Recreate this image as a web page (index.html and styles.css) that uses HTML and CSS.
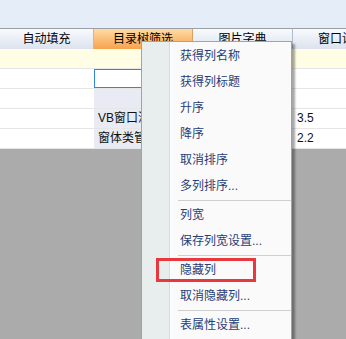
FILE: index.html
```html
<!DOCTYPE html>
<html lang="zh-CN">
<head>
  <meta charset="UTF-8">
  <title>表格右键菜单</title>
  <link rel="stylesheet" href="styles.css">
</head>
<body>
  <div class="toolbar"></div>

  <div class="grid">
    <div class="row head">
      <div class="cell c1">自动填充</div>
      <div class="cell c2 active">目录树筛选</div>
      <div class="cell c3">图片字典</div>
      <div class="cell c4">窗口设计</div>
    </div>
    <div class="row new">
      <div class="cell c1"></div>
      <div class="cell c2"></div>
      <div class="cell c3"></div>
      <div class="cell c4"></div>
    </div>
    <div class="row">
      <div class="cell c1"></div>
      <div class="cell c2 editing"><input type="text" class="edit"></div>
      <div class="cell c3"></div>
      <div class="cell c4"></div>
    </div>
    <div class="row">
      <div class="cell c1"></div>
      <div class="cell c2 tint"></div>
      <div class="cell c3"></div>
      <div class="cell c4"></div>
    </div>
    <div class="row">
      <div class="cell c1"></div>
      <div class="cell c2 tint">VB窗口消息</div>
      <div class="cell c3"></div>
      <div class="cell c4">3.5</div>
    </div>
    <div class="row">
      <div class="cell c1"></div>
      <div class="cell c2 tint">窗体类管理</div>
      <div class="cell c3"></div>
      <div class="cell c4">2.2</div>
    </div>
  </div>

  <div class="menu">
    <div class="item">获得列名称</div>
    <div class="item">获得列标题</div>
    <div class="item">升序</div>
    <div class="item">降序</div>
    <div class="item">取消排序</div>
    <div class="item">多列排序...</div>
    <div class="sep"></div>
    <div class="item">列宽</div>
    <div class="item">保存列宽设置...</div>
    <div class="sep"></div>
    <div class="item">隐藏列</div>
    <div class="item">取消隐藏列...</div>
    <div class="sep"></div>
    <div class="item">表属性设置...</div>
    <div class="mark"></div>
  </div>
</body>
</html>
```

FILE: styles.css
```css
body {
  margin: 0;
  width: 346px;
  height: 339px;
  overflow: hidden;
  background: #ababab;
  font-family: "Liberation Sans", "Noto Sans CJK SC", sans-serif;
  font-size: 12px;
  color: #111;
  position: relative;
}

.toolbar {
  height: 28px;
  background: #e5edf8;
  border-bottom: 1px solid #9c9fa5;
}

.grid {
  width: 393px;
  background: #fff;
}

.row {
  display: flex;
  height: 19px;
  border-bottom: 1px solid #e6e6e6;
}

.cell {
  flex: none;
  height: 19px;
  line-height: 19px;
  padding-left: 4px;
  box-sizing: border-box;
  white-space: nowrap;
  overflow: hidden;
}

.c1 { width: 94px; }
.c2 { width: 99px; }
.c3 { width: 100px; }
.c4 { width: 100px; }

.head {
  height: 20px;
  border-bottom: none;
}

.head .cell {
  height: 20px;
  line-height: 20px;
  padding-left: 0;
  text-align: center;
  background: linear-gradient(#f8fafd, #dce3ee);
  border-right: 1px solid #b4bccb;
  color: #000;
}

.head .c4 {
  text-align: left;
  padding-left: 25px;
}

.head .active {
  background: linear-gradient(#ffdca6, #f6a24c);
  border-right-color: #e0a060;
}

.new .cell {
  background: #fffde4;
}

.tint {
  background: #e8ebf3;
}

.editing {
  padding: 0;
}

.edit {
  display: block;
  width: 99px;
  height: 19px;
  margin: 0;
  padding: 0;
  box-sizing: border-box;
  border: 1px solid #2f86e0;
  outline: none;
}

.menu {
  position: absolute;
  left: 141px;
  top: 41px;
  width: 151px;
  height: 310px;
  box-sizing: border-box;
  padding-top: 1px;
  border: 1px solid #a3a3a3;
  background: linear-gradient(to right, #e8eded 0 27px, #d5dada 27px 28px, #fff 28px 29px, #fafafa 29px);
  box-shadow: 3px 3px 2px rgba(0, 0, 0, 0.35);
}

.item {
  height: 26px;
  line-height: 26px;
  padding-left: 38px;
  color: #263d78;
  white-space: nowrap;
}

.sep {
  height: 1px;
  margin: 1px 0 1px 36px;
  background: #cfcfcf;
}

.mark {
  position: absolute;
  left: 14px;
  top: 216px;
  width: 100px;
  height: 24px;
  box-sizing: border-box;
  border: 3px solid #e8383d;
}
```
